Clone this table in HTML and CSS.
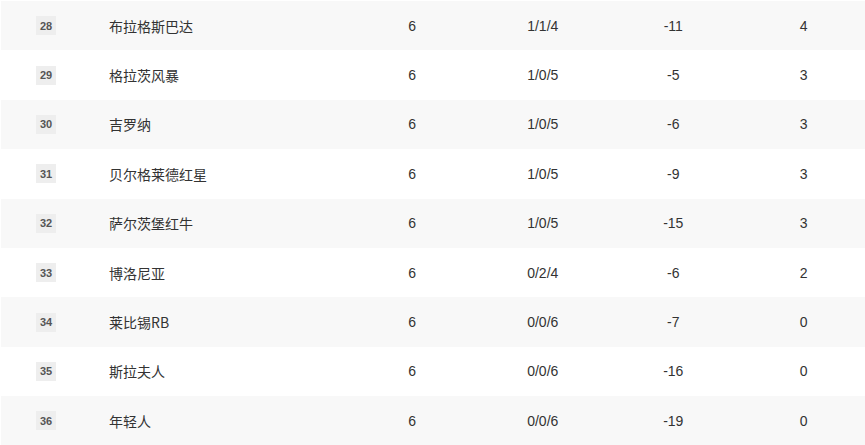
FILE: index.html
```html
<!DOCTYPE html>
<html lang="zh-CN">
<head>
<meta charset="utf-8">
<title>积分榜</title>
<link rel="stylesheet" href="styles.css">
</head>
<body>
<div class="wrap">
<table class="standings">
  <colgroup>
    <col class="c-rank"><col class="c-name"><col class="c-num"><col class="c-num"><col class="c-num"><col class="c-num">
  </colgroup>
  <tbody>
    <tr><td class="rank"><span class="badge">28</span></td><td class="name">布拉格斯巴达</td><td>6</td><td>1/1/4</td><td>-11</td><td>4</td></tr>
    <tr><td class="rank"><span class="badge">29</span></td><td class="name">格拉茨风暴</td><td>6</td><td>1/0/5</td><td>-5</td><td>3</td></tr>
    <tr><td class="rank"><span class="badge">30</span></td><td class="name">吉罗纳</td><td>6</td><td>1/0/5</td><td>-6</td><td>3</td></tr>
    <tr><td class="rank"><span class="badge">31</span></td><td class="name">贝尔格莱德红星</td><td>6</td><td>1/0/5</td><td>-9</td><td>3</td></tr>
    <tr><td class="rank"><span class="badge">32</span></td><td class="name">萨尔茨堡红牛</td><td>6</td><td>1/0/5</td><td>-15</td><td>3</td></tr>
    <tr><td class="rank"><span class="badge">33</span></td><td class="name">博洛尼亚</td><td>6</td><td>0/2/4</td><td>-6</td><td>2</td></tr>
    <tr><td class="rank"><span class="badge">34</span></td><td class="name">莱比锡RB</td><td>6</td><td>0/0/6</td><td>-7</td><td>0</td></tr>
    <tr><td class="rank"><span class="badge">35</span></td><td class="name">斯拉夫人</td><td>6</td><td>0/0/6</td><td>-16</td><td>0</td></tr>
    <tr><td class="rank"><span class="badge">36</span></td><td class="name">年轻人</td><td>6</td><td>0/0/6</td><td>-19</td><td>0</td></tr>
  </tbody>
</table>
</div>
</body>
</html>
```
FILE: styles.css
```css
html, body {
  margin: 0;
  padding: 0;
  background: #fff;
  overflow: hidden;
}
.wrap {
  width: 865px;
  overflow: hidden;
  padding-top: 1px;
  padding-left: 1px;
  box-sizing: border-box;
}
.standings {
  border-collapse: collapse;
  table-layout: fixed;
  width: 868px;
  font-family: "Liberation Sans", "Noto Sans CJK SC", sans-serif;
  font-size: 14px;
  color: #333;
}
.c-rank { width: 90px; }
.c-name { width: 256px; }
.c-num { width: 130.5px; }
.standings tr {
  height: 49.4px;
}
.standings tr:nth-child(odd) {
  background: #f8f8f8;
}
.standings td {
  padding: 0;
  text-align: center;
  vertical-align: middle;
}
.standings td.name {
  text-align: left;
  padding-left: 18px;
  font-family: "Noto Sans CJK SC", "Liberation Sans", sans-serif;
}
.badge {
  display: inline-flex;
  align-items: center;
  justify-content: center;
  width: 20px;
  height: 19px;
  background: #eee;
  color: #555;
  font-size: 11px;
  font-weight: bold;
  vertical-align: middle;
}
```
